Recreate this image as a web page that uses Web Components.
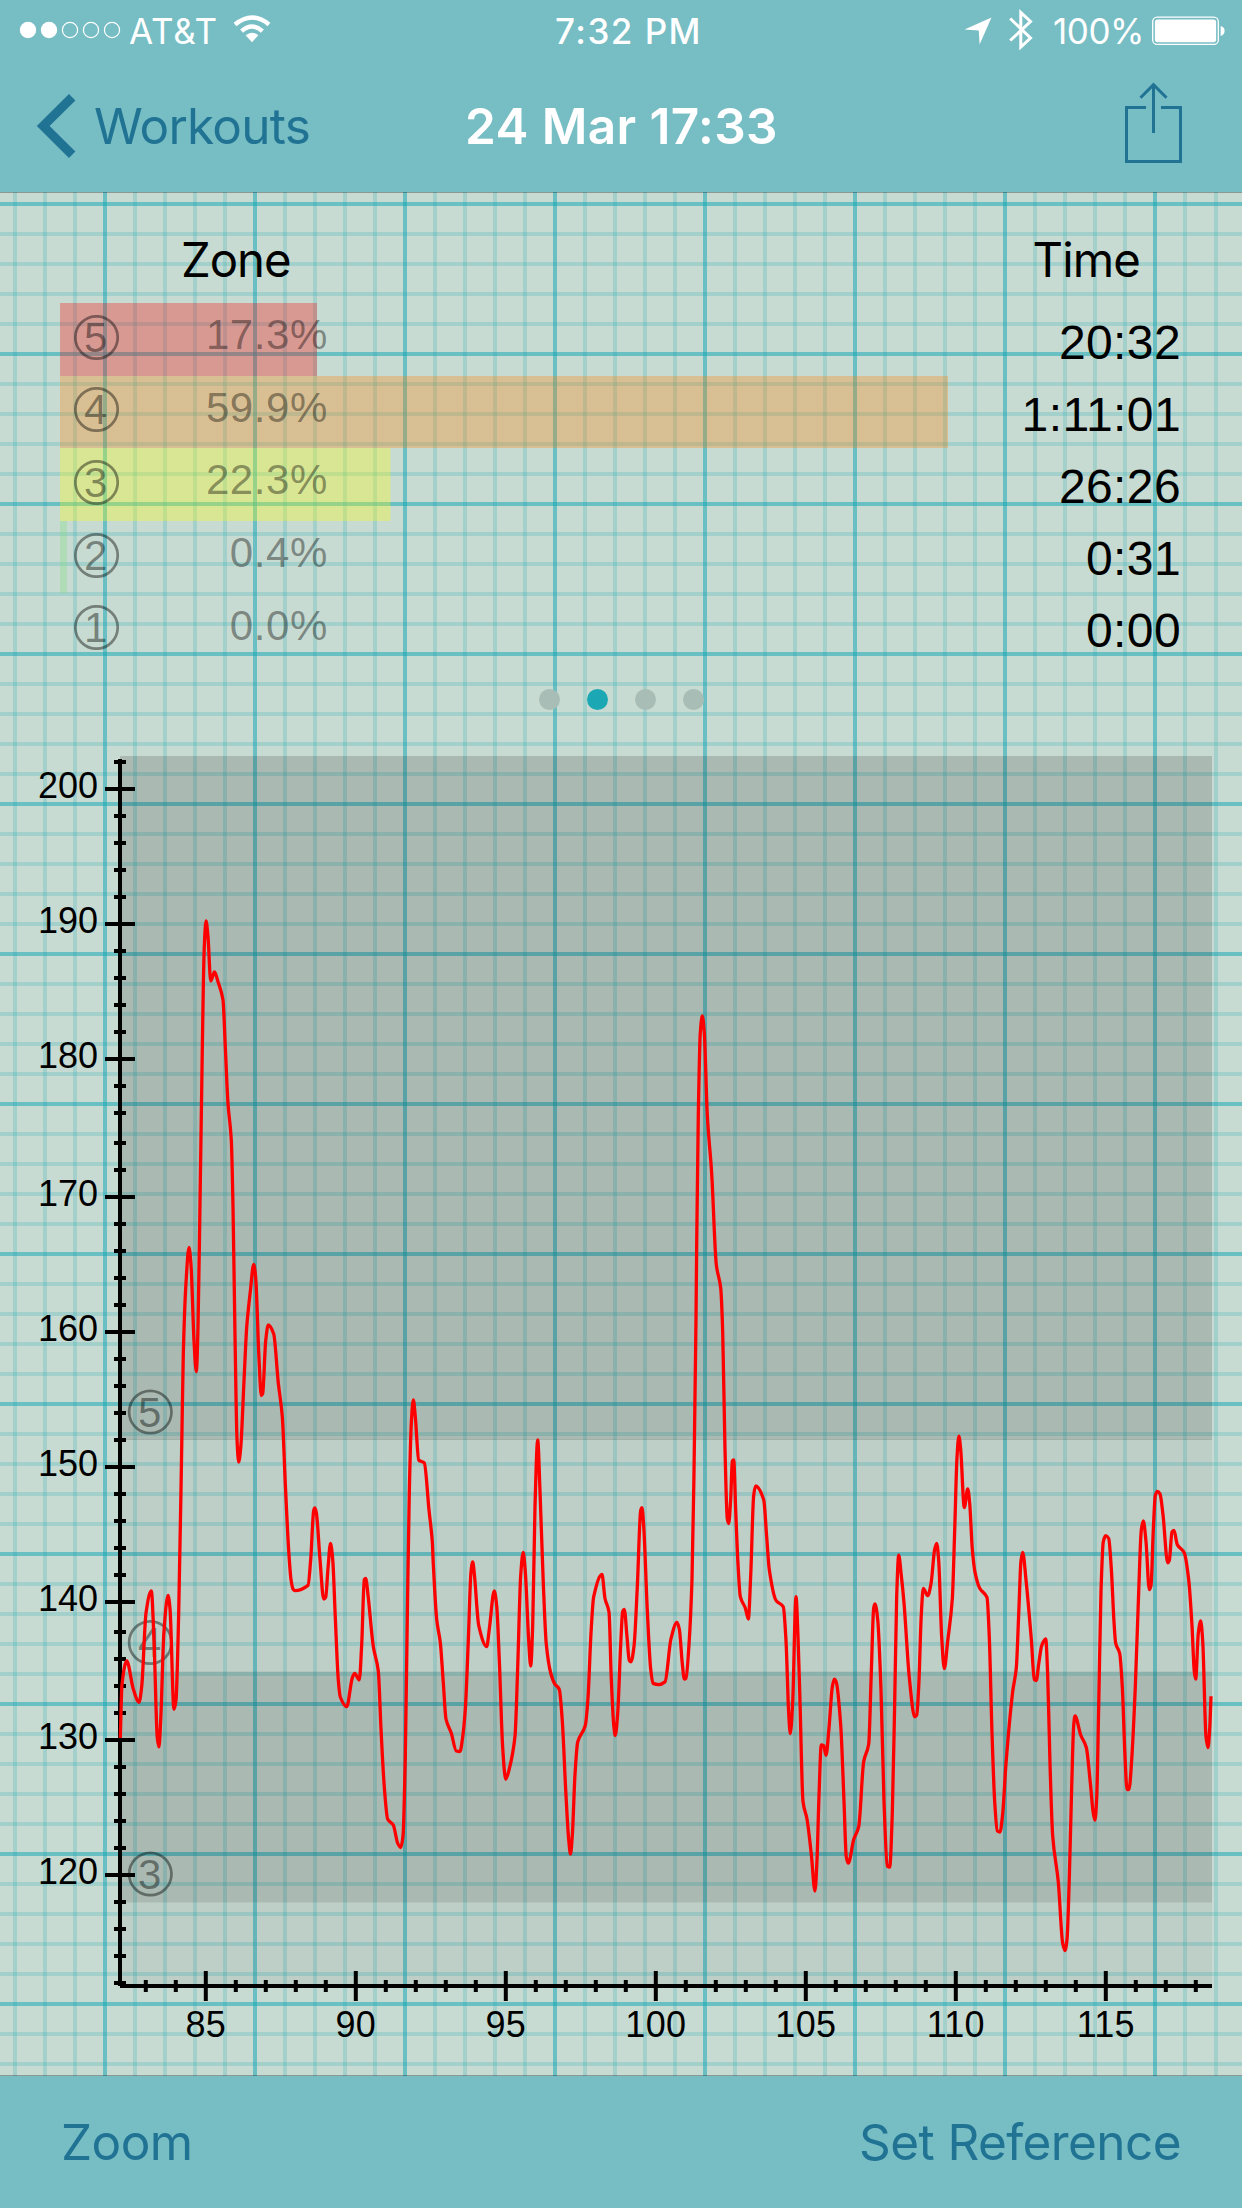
<!DOCTYPE html>
<html lang="en">
<head>
<meta charset="utf-8">
<title>24 Mar 17:33</title>
<style>
html, body { margin: 0; padding: 0; }
body { width: 1242px; height: 2208px; overflow: hidden; background: #c8dbd2; }
</style>
</head>
<body>
<workout-screen></workout-screen>
<script>
const define = (name, html, after) => {
  const tpl = document.createElement('template');
  tpl.innerHTML = html;
  customElements.define(name, class extends HTMLElement {
    connectedCallback() {
      if (this.shadowRoot) return;
      this.attachShadow({ mode: 'open' }).appendChild(tpl.content.cloneNode(true));
      if (after) after.call(this, this.shadowRoot);
    }
  });
};

/* A text label tracked so that its advance equals the width attribute. */
define('tracked-label', `
<style>
:host { display: block; white-space: nowrap; line-height: 1.2; }
span { display: inline-block; }
</style><span></span>`, function (root) {
  const span = root.querySelector('span');
  span.textContent = this.getAttribute('text');
  const target = +this.getAttribute('width');
  const natural = span.getBoundingClientRect().width;
  span.style.letterSpacing = ((target - natural) / span.textContent.length).toFixed(3) + 'px';
  this.style.width = target + 'px';
});

define('status-bar', `
<style>
:host { display: grid; grid-template-columns: 1fr 147px 1fr; align-items: center; height: 60px;
  box-sizing: border-box; padding: 3px 16px 0 19px; color: #fff; font: 400 35px Inter, sans-serif; }
.side { display: flex; align-items: center; }
.right { justify-content: flex-end; }
svg { display: block; }
.time { font-weight: 500; margin-left: 6px; margin-top: -1px; }
.side tracked-label { margin-top: -1px; }
</style>
<div class="side">
  <svg width="104" height="20" viewBox="0 0 104 20" style="margin:-4px 6px 0 0">
    <g fill="#fff"><circle cx="9" cy="10" r="8.2"/><circle cx="30" cy="10" r="8.2"/></g>
    <g fill="none" stroke="#fff" stroke-width="1.2"><circle cx="51" cy="10" r="7.6"/><circle cx="72" cy="10" r="7.6"/><circle cx="93" cy="10" r="7.6"/></g>
  </svg>
  <tracked-label text="AT&amp;T" width="89"></tracked-label>
  <svg width="38" height="30" viewBox="0 0 38 30" style="margin:-5px 0 0 15px">
    <path d="M19 28.2 L12.6 21.2 Q19 16.2 25.4 21.2 Z" fill="#fff"/>
    <g fill="none" stroke="#fff" stroke-width="4.4"><path d="M8.6 17.2 Q19 7.8 29.4 17.2"/><path d="M2 10.5 Q19 -3.6 36 10.5"/></g>
  </svg>
</div>
<tracked-label class="time" text="7:32 PM" width="147"></tracked-label>
<div class="side right">
  <svg width="28" height="28" viewBox="0 0 28 28" style="margin:-2px 17px 0 0"><path d="M27.5 0.5 L15.6 27.5 L14.8 13.6 L0.5 12.6 Z" fill="#fff"/></svg>
  <svg width="25" height="42" viewBox="0 0 25 42" style="margin:-3px 19px 0 0"><path d="M1.2 9.5 L21.5 29 L11.8 38 V3.5 L21.5 12.5 L1.2 31.5" fill="none" stroke="#fff" stroke-width="3"/></svg>
  <tracked-label text="100%" width="91"></tracked-label>
  <svg width="74" height="30" viewBox="0 0 74 30" style="margin:-2px 0 0 8px">
    <rect x="0.7" y="1.2" width="65.6" height="27.2" rx="4.5" fill="none" stroke="#fff" stroke-width="1.3"/>
    <rect x="2.9" y="3.4" width="61.2" height="22.8" rx="2.6" fill="#fff"/>
    <path d="M68.6 10 Q72.6 11 72.6 14.8 Q72.6 18.8 68.6 20 Z" fill="#fff"/>
  </svg>
</div>`);

define('nav-bar', `
<style>
:host { display: grid; grid-template-columns: 1fr 314px 1fr; align-items: center; height: 132px;
  box-sizing: border-box; padding: 0 60px 0 36px; color: #217394; font: 400 49.5px Inter, sans-serif; }
.back { display: flex; align-items: center; gap: 18px; }
.back tracked-label { margin-top: 2px; }
.title { color: #fff; font-weight: 600; margin: 2px -13px 0 13px; }
.share { justify-self: end; margin-top: -7px; }
svg { display: block; }
</style>
<div class="back">
  <svg width="40" height="66" viewBox="0 0 40 66"><path d="M33 1 L39.4 7.6 L13.6 33 L39.4 58.4 L33 65 L0.8 33 Z" fill="#217394"/></svg>
  <tracked-label text="Workouts" width="216"></tracked-label>
</div>
<tracked-label class="title" text="24 Mar 17:33" width="313"></tracked-label>
<svg class="share" width="57" height="82" viewBox="0 0 57 82" fill="none" stroke="#217394" stroke-width="3">
  <path d="M21 25.5 H1.5 V79.5 H55.5 V25.5 H36"/><path d="M28.5 3 V51"/><path d="M15.5 15.8 L28.5 2.6 L41.5 15.8"/>
</svg>`);

define('tool-bar', `
<style>
:host { display: flex; justify-content: space-between; align-items: center; height: 132px; box-sizing: border-box;
  padding: 2px 61px 0 61px; background: #77bdc4; box-shadow: 0 -1px rgba(0,0,0,.3); position: relative;
  color: #217394; font: 400 49.5px Inter, sans-serif; }
</style>
<tracked-label text="Zoom" width="131.5"></tracked-label>
<tracked-label text="Set Reference" width="322"></tracked-label>`);

/* Millimetre paper: faint line every 30px, strong line every 150px. */
define('grid-paper', `
<style>
:host { display: block; position: relative; overflow: hidden; }
svg { position: absolute; inset: 0; }
.content { position: relative; }
</style>
<svg width="1242" height="1884"></svg><div class="content"><slot></slot></div>`, function (root) {
  let minor = '', major = '';
  for (let i = 0; i < 63; i++) {
    const y = 12 + i * 30;
    if (i % 5) minor += `M0 ${y}H1242`; else major += `M0 ${y}H1242`;
  }
  for (let i = 0; i < 41; i++) {
    const x = 15 + i * 30 + (i === 40 ? 1 : 0);
    if (i % 5 === 3) major += `M${x} 0V1884`; else minor += `M${x} 0V1884`;
  }
  const line = (d, o) => d.split('M').slice(1).map(s => `<path d="M${s}" stroke-opacity="${o}"/>`).join('');
  root.querySelector('svg').innerHTML =
    `<g fill="none" stroke="#1ca8b4" stroke-width="4">${line(minor, .21)}${line(major, .55)}</g>`;
});

define('zone-row', `
<style>
:host { display: flex; height: 72.6px; box-sizing: border-box; color: rgba(0,0,0,.4);
  font: 42px "Liberation Sans", Arial, sans-serif; align-items: center;
  background: linear-gradient(var(--tint), var(--tint)) no-repeat; background-size: var(--bar) 100%; }
.badge { width: 45px; height: 45px; flex: none; margin: 0 0 4px 13.5px; }
svg { display: block; }
.pct { width: 209.5px; text-align: right; line-height: 42px; letter-spacing: .6px; margin-bottom: 8px; }
</style>
<div class="badge"><svg width="45" height="45" viewBox="0 0 45 45">
  <circle cx="22.5" cy="22.5" r="21.2" fill="none" stroke="#000" stroke-opacity=".42" stroke-width="2.7"/>
  <text x="21.8" y="37.3" text-anchor="middle" font-size="42" fill="#000" fill-opacity=".42"></text>
</svg></div><div class="pct"><slot></slot></div>`, function (root) {
  root.querySelector('text').textContent = this.getAttribute('zone');
  this.style.setProperty('--tint', this.getAttribute('tint'));
  this.style.setProperty('--bar', this.getAttribute('bar') + 'px');
});

define('zone-summary', `
<style>
:host { display: flex; justify-content: space-between; height: 476px; box-sizing: border-box;
  padding: 38px 61px 0 60px; color: #000; }
tracked-label { font: 400 47.3px Inter, sans-serif; line-height: 60px; }
.zones { width: 900px; display: flex; flex-direction: column; }
.zones tracked-label { margin: 0 0 13px 121px; }
.times { display: flex; flex-direction: column; align-items: flex-end; letter-spacing: .4px;
  font: 48px/72px "Liberation Sans", Arial, sans-serif; }
.times tracked-label { margin: 0 41px 17px 0; letter-spacing: 0; }
</style>
<div class="zones">
  <tracked-label text="Zone" width="109.5"></tracked-label>
  <zone-row zone="5" tint="rgba(255,0,0,.3)" bar="257">17.3%</zone-row>
  <zone-row zone="4" tint="rgba(255,127,0,.3)" bar="888">59.9%</zone-row>
  <zone-row zone="3" tint="rgba(255,255,0,.3)" bar="330.5">22.3%</zone-row>
  <zone-row zone="2" tint="rgba(120,220,120,.3)" bar="7">0.4%</zone-row>
  <zone-row zone="1" tint="transparent" bar="0">0.0%</zone-row>
</div>
<div class="times">
  <tracked-label text="Time" width="107.5"></tracked-label>
  <div>20:32</div><div>1:11:01</div><div>26:26</div><div>0:31</div><div>0:00</div>
</div>`);

define('page-dots', `
<style>
:host { display: flex; justify-content: center; gap: 27px; height: 66px; padding-top: 21px; box-sizing: border-box; }
i { width: 21px; height: 21px; border-radius: 50%; background: #a8bdb6; }
i.on { background: #1ba8b4; }
</style><i></i><i class="on"></i><i></i><i></i>`);

const TRACE = [
120.3,1738,122,1684.5,126.7,1660.8,133.3,1689,139,1702.3,141.7,1686.7,146,1613,151.3,1590.8,154,1640,157.3,1738,159,1746.9,160.7,1720,164,1631,168,1595.3,170,1608.6,174,1709.4,176,1700,178.7,1613,181.7,1447.9,183.3,1354,186,1282.7,189,1247.5,191,1264.8,194,1340.7,196.3,1371.5,198,1327.3,200,1203,201.7,1090,203.3,986.7,204.3,946.7,206,921,208,936.7,210.7,981,214.5,972,218,981.7,223,1000,225.3,1046.7,228,1103.3,231.3,1140,233,1206.7,235,1336,237,1439,238.7,1462,240.7,1447.9,244,1380.9,246.7,1327.3,250.3,1291.6,253.7,1264.3,255.7,1278,259,1358.6,261.3,1395.5,262.7,1393.4,265.7,1340.7,268.3,1325,273.7,1334,278.3,1383,282.3,1416.6,285.3,1483.6,288.7,1550.5,291,1579.6,293,1589,295,1590.7,308,1585.4,310.7,1559.5,313.7,1510.4,314.8,1508,316.3,1512.6,320,1559.5,323.7,1599,325.7,1597.4,328,1568.4,330.5,1543.5,332.7,1559.5,335.3,1617.5,338.3,1680,340.3,1697,346.7,1706.7,352.3,1677.8,354.7,1673.5,359.3,1679.9,361.7,1644.3,364.3,1579.6,365.7,1578.3,368,1595,373.3,1646.5,378.3,1671,381,1729,384.3,1787,387.7,1819.3,393.3,1825,397.7,1843.3,400.7,1847.5,403,1836,405.3,1756,407.3,1617.5,409.3,1492.5,411.3,1423.3,413.3,1399.8,415.3,1416.6,418.7,1460,424.3,1463,429,1510,432.3,1541.6,433.3,1564,436.7,1619.5,440.3,1642.5,443.3,1682.7,446,1719,451.3,1733.2,456.3,1751,460,1751.5,462.3,1740,465.3,1709.4,468.3,1640.6,471,1571.7,472.7,1562,474.3,1573.6,478.7,1625.3,486.7,1646.5,489.3,1629,494.3,1591,496.7,1606,499.3,1659.7,502.7,1747.7,505.7,1779.3,509.3,1768.8,515,1736.2,517.7,1667.3,520.7,1575.5,523.2,1552.5,525.3,1571.7,528.7,1640.6,530.7,1666,532.7,1625,535,1506.6,537.7,1440,540,1491.3,543.3,1583.2,546.3,1644.4,550.7,1673,554.7,1683.8,559.3,1689.5,562.3,1721,565.7,1789.8,568.7,1839.5,570.5,1854,572.3,1835.7,575,1774.5,577.7,1742,585.3,1725.5,588,1698,591,1633,593.7,1596.6,602,1574.5,605,1598.5,609,1611.9,611.3,1678.8,613.7,1724.7,615.3,1735.5,617.7,1713.3,620.7,1644.4,622.7,1611.5,624.3,1609.4,627,1636.7,629.3,1660.5,631,1661.8,634,1646.3,637.3,1587,640.7,1510.5,642,1507.6,643.7,1525.8,647.3,1610,650.7,1669.3,653,1683.4,658.7,1684.6,665,1681.9,671,1638.7,677,1622.4,679.3,1629,682.3,1663.5,684.3,1679,686,1678.2,689,1644.4,692,1579.3,694,1472.2,696,1319,696.7,1244,698.3,1115,700.3,1032.8,702.3,1016,704.3,1032.8,707.3,1115,711.7,1173.6,716.3,1264.6,720.7,1288,722.7,1332,725,1449.4,727.3,1518.8,728.7,1523.5,730.7,1499,732.3,1461,733.7,1459.8,735.7,1510.5,738,1564,740.3,1596.6,745.3,1608,748.3,1619,750.7,1575.5,753.7,1495.2,755.7,1486,763.7,1499.7,766.7,1537.2,769.3,1569.8,776,1600.4,783.3,1606.9,786,1640.6,788.7,1713.3,790.3,1733.5,792.7,1701.8,796,1596.6,798,1636.7,800,1701.7,803,1801.5,807,1819,811.3,1854.3,815,1891,817,1860,819,1795.6,821.3,1744.8,823.7,1745.7,826,1755.3,829,1728,832.3,1687,834.3,1679.2,836.3,1682.3,840.7,1725,844,1801.5,846.3,1857.2,848.3,1863.2,853.7,1839.6,858.7,1826.7,863.7,1761.6,868.7,1744,871.3,1672.4,873.7,1607.8,875,1603.8,877.7,1619.6,881,1690,884,1801.5,887.3,1866,889.7,1867.2,892.3,1813.2,894.7,1701.7,896.7,1596,898.7,1555.2,901.3,1575.5,904,1602.8,909.3,1677.4,914.7,1716.8,916.7,1715.2,918.7,1687,921.3,1614.3,923.3,1588.5,927.7,1595.7,931,1583.7,934.7,1549.2,936.7,1543.3,938.7,1560.7,941.7,1637.2,944.3,1668.5,947.7,1641,952.3,1599,954.7,1530,957,1457.4,958.9,1436.2,960.7,1449.7,964.3,1507.5,967.7,1489,969.7,1503.3,972.3,1549.2,975,1572.2,979.7,1588.3,987,1597.5,989.3,1637.2,992,1733,994.7,1801.8,997.3,1831,1000,1832,1002.7,1813.3,1006,1763.5,1012.7,1691.6,1016.3,1667.9,1018.7,1614.3,1021,1560.7,1022.7,1552.3,1026,1579.8,1031.3,1639.2,1034.3,1679.5,1036.3,1680.5,1038.7,1664,1041.7,1645.7,1045.7,1639,1047.7,1675.5,1050,1763.5,1052.7,1836.2,1058.3,1882,1062.7,1943.4,1065,1950.5,1067,1939.5,1069.3,1878.3,1071.7,1786.5,1073.7,1725.3,1075,1716,1080.7,1735,1086.3,1747.5,1090.3,1782.7,1093.3,1813.3,1095,1820.2,1096.7,1798,1098.7,1706,1101,1591.3,1103.3,1541.6,1105.7,1535.7,1108.7,1538.5,1111.3,1568.4,1114,1622,1115.7,1643.4,1119.7,1653.3,1122.3,1687,1125,1755.9,1127,1789.5,1129,1789.5,1131.7,1759.7,1135.3,1687,1138.7,1591.3,1141.3,1530,1143.3,1521,1146,1541.6,1149.3,1589.6,1151,1585.6,1153.3,1530,1155.3,1495.7,1157.3,1491.3,1160,1493.8,1163,1514.8,1167.7,1562.8,1169.3,1560.7,1172,1532,1174,1530.5,1177.3,1544.6,1184.3,1553,1188.7,1579.8,1192,1625.8,1194.3,1671.7,1195.7,1679,1198.3,1633.4,1200.7,1621,1202.7,1641,1206,1736.7,1208,1747.5,1209.7,1729,1211,1696.2];

/* Monotone cubic path through a flat x,y list. */
function monotonePath(flat) {
  const n = flat.length / 2, X = i => flat[2 * i], Y = i => flat[2 * i + 1];
  const s = [], m = [];
  for (let i = 0; i < n - 1; i++) s.push((Y(i + 1) - Y(i)) / (X(i + 1) - X(i)));
  for (let i = 0; i < n; i++) {
    if (i === 0 || i === n - 1) { m.push(s[i === 0 ? 0 : n - 2]); continue; }
    const a = s[i - 1], b = s[i];
    m.push(a * b <= 0 ? 0 : 2 * a * b / (a + b));
  }
  let d = `M${X(0)} ${Y(0)}`;
  for (let i = 0; i < n - 1; i++) {
    const h = (X(i + 1) - X(i)) / 3;
    d += `C${(X(i) + h).toFixed(2)} ${(Y(i) + m[i] * h).toFixed(2)} ${(X(i + 1) - h).toFixed(2)} ${(Y(i + 1) - m[i + 1] * h).toFixed(2)} ${X(i + 1)} ${Y(i + 1)}`;
  }
  return d;
}

define('heart-chart', `
<style>
:host { display: block; height: 1342px; }
svg { display: block; }
text { font-family: "Liberation Sans", Arial, sans-serif; }
</style>
<svg width="1242" height="1342" viewBox="0 734 1242 1342"></svg>`, function (root) {
  let out = '<g fill="#000"><rect x="120" y="756" width="1092" height="684" fill-opacity=".15"/>' +
    '<rect x="120" y="1439" width="1092" height="233" fill-opacity=".05"/>' +
    '<rect x="120" y="1671.7" width="1092" height="230.6" fill-opacity=".15"/>' +
    '<rect x="120" y="1902" width="1092" height="84" fill-opacity=".05"/></g>';
  out += [[5, 1412], [4, 1642.5], [3, 1874]].map(([z, y]) =>
    `<circle cx="150.3" cy="${y}" r="21.2" fill="none" stroke="#000" stroke-opacity=".42" stroke-width="2.7"/>` +
    `<text x="149.6" y="${y + 14.5}" font-size="42" text-anchor="middle" fill-opacity=".42">${z}</text>`).join('');
  let minor = '', major = '', y = 762, bpm = 202;
  while (y <= 1983) {
    if (bpm % 10 === 0) {
      major += `M105 ${y}H135`;
      out += `<text x="98" y="${y + 9}" font-size="36" text-anchor="end">${bpm}</text>`;
    } else minor += `M114 ${y}H126`;
    y += (y === 1113 || y === 1602) ? 30 : 27;
    bpm -= 2;
  }
  for (let i = 0; i < 36; i++) {
    const x = 145.8 + 30 * i, v = 83 + i;
    if (v % 5 === 0) {
      major += `M${x} 1971V2001`;
      out += `<text x="${x}" y="2037" font-size="36" letter-spacing=".3" text-anchor="middle">${v}</text>`;
    } else minor += `M${x} 1980V1992`;
  }
  out += `<path d="M120 759V1986M120 1986H1212${minor}${major}" stroke="#000" stroke-width="4" fill="none"/>`;
  out += `<path d="${monotonePath(TRACE)}" stroke="#f00" stroke-width="3.3" fill="none" stroke-linejoin="round"/>`;
  root.querySelector('svg').innerHTML = out;
});

define('workout-screen', `
<style>
:host { display: flex; flex-direction: column; width: 1242px; height: 2208px; }
header { background: #77bdc4; box-shadow: 0 1px rgba(0,0,0,.3); position: relative; z-index: 1; }
grid-paper { height: 1884px; background: #c8dbd2; }
</style>
<header><status-bar></status-bar><nav-bar></nav-bar></header>
<grid-paper><zone-summary></zone-summary><page-dots></page-dots><heart-chart></heart-chart></grid-paper>
<tool-bar></tool-bar>`);
</script>
</body>
</html>
